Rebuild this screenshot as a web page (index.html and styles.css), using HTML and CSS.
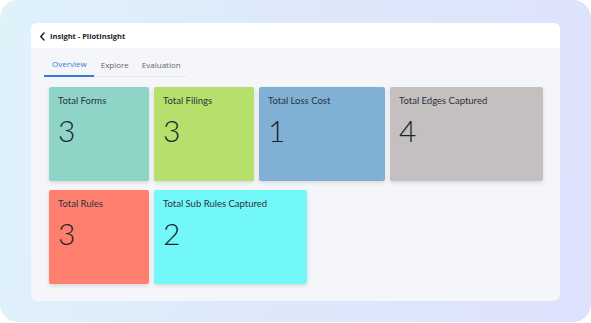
FILE: index.html
```html
<!DOCTYPE html>
<html lang="en">
<head>
    <meta charset="UTF-8">
    <meta name="viewport" content="width=device-width, initial-scale=1.0">
    <title>Insight - PilotInsight</title>
    <link rel="stylesheet" href="styles.css">
</head>
<body>
    <div class="frame">
        <div class="window">
            <!--top bar with back arrow and title-->
            <header class="topbar">
                <svg class="back" width="7" height="9" viewBox="0 0 7 9">
                    <path d="M5 1 L1.8 4.5 L5 8" fill="none" stroke="#222" stroke-width="1.5" stroke-linecap="round" stroke-linejoin="round"/>
                </svg>
                <span class="title">Insight - PilotInsight</span>
            </header>

            <main class="content">
                <!--tabs-->
                <nav class="tabs">
                    <a class="tab active">Overview</a>
                    <a class="tab">Explore</a>
                    <a class="tab">Evaluation</a>
                </nav>

                <!--stat cards-->
                <div class="cards">
                    <div class="card card-sm forms">
                        <div class="card-label">Total Forms</div>
                        <div class="card-value">3</div>
                    </div>
                    <div class="card card-sm filings">
                        <div class="card-label">Total Filings</div>
                        <div class="card-value">3</div>
                    </div>
                    <div class="card card-md loss">
                        <div class="card-label">Total Loss Cost</div>
                        <div class="card-value">1</div>
                    </div>
                    <div class="card card-lg edges">
                        <div class="card-label">Total Edges Captured</div>
                        <div class="card-value">4</div>
                    </div>
                    <div class="card card-sm rules">
                        <div class="card-label">Total Rules</div>
                        <div class="card-value">3</div>
                    </div>
                    <div class="card card-lg subrules">
                        <div class="card-label">Total Sub Rules Captured</div>
                        <div class="card-value">2</div>
                    </div>
                </div>
            </main>
        </div>
    </div>
</body>
</html>
```

FILE: styles.css
```css
body {
    margin: 0;
    padding: 0;
    background-color: #ffffff;
    font-family: "Lato", "Noto Sans", sans-serif;
    color: #1f2937;
}

/*outer gradient frame*/
.frame {
    width: 591px;
    height: 322px;
    box-sizing: border-box;
    padding: 23px 31px 21px 31px;
    border-radius: 18px;
    background: linear-gradient(100deg, #dff2fa 0%, #dde8fa 50%, #dde2fc 100%);
    display: flex;
}

.window {
    flex: 1;
    display: flex;
    flex-direction: column;
    background-color: #f5f6fa;
    border-radius: 6px;
    overflow: hidden;
}

.topbar {
    height: 25px;
    display: flex;
    align-items: center;
    gap: 4px;
    padding-left: 8px;
    background-color: #ffffff;
}

.back {
    margin-top: 1px;
}

.title {
    font-family: "Open Sans", sans-serif;
    font-size: 7.5px;
    font-weight: 700;
    color: #222;
}

.content {
    flex: 1;
    padding: 0 10px 0 13px;
}

.tabs {
    display: flex;
    width: 143px;
    height: 28px;
    border-bottom: 1px solid #e8eaef;
}

.tab {
    display: flex;
    align-items: center;
    padding: 4px 6px 0 7px;
    font-family: "Open Sans", sans-serif;
    font-size: 8px;
    color: #666;
    cursor: pointer;
}

.tab.active {
    padding: 4px 7px 0 8px;
    color: #2f7be0;
    border-bottom: 2px solid #2f7be0;
    margin-bottom: -1px;
}

.cards {
    display: flex;
    flex-wrap: wrap;
    column-gap: 5px;
    row-gap: 9px;
    margin: 10px 0 0 5px;
}

.card {
    height: 94px;
    box-sizing: border-box;
    padding: 8px 9px;
    border-radius: 2px;
    box-shadow: 0 2px 4px rgba(0, 0, 0, 0.12);
}

.card-sm {
    width: 100px;
}

.card-md {
    width: 126px;
}

.card-lg {
    width: 153px;
}

.card-label {
    font-size: 9.5px;
    color: #2b3240;
}

.card-value {
    margin-top: 6px;
    font-size: 30px;
    font-weight: 300;
    color: #1c2432;
}

.forms { background-color: #8ed5c8; }
.filings { background-color: #b6df6b; }
.loss { background-color: #80b0d4; }
.edges { background-color: #c4c0bf; }
.rules { background-color: #ff7f6e; }
.subrules { background-color: #73f8fa; }
```
